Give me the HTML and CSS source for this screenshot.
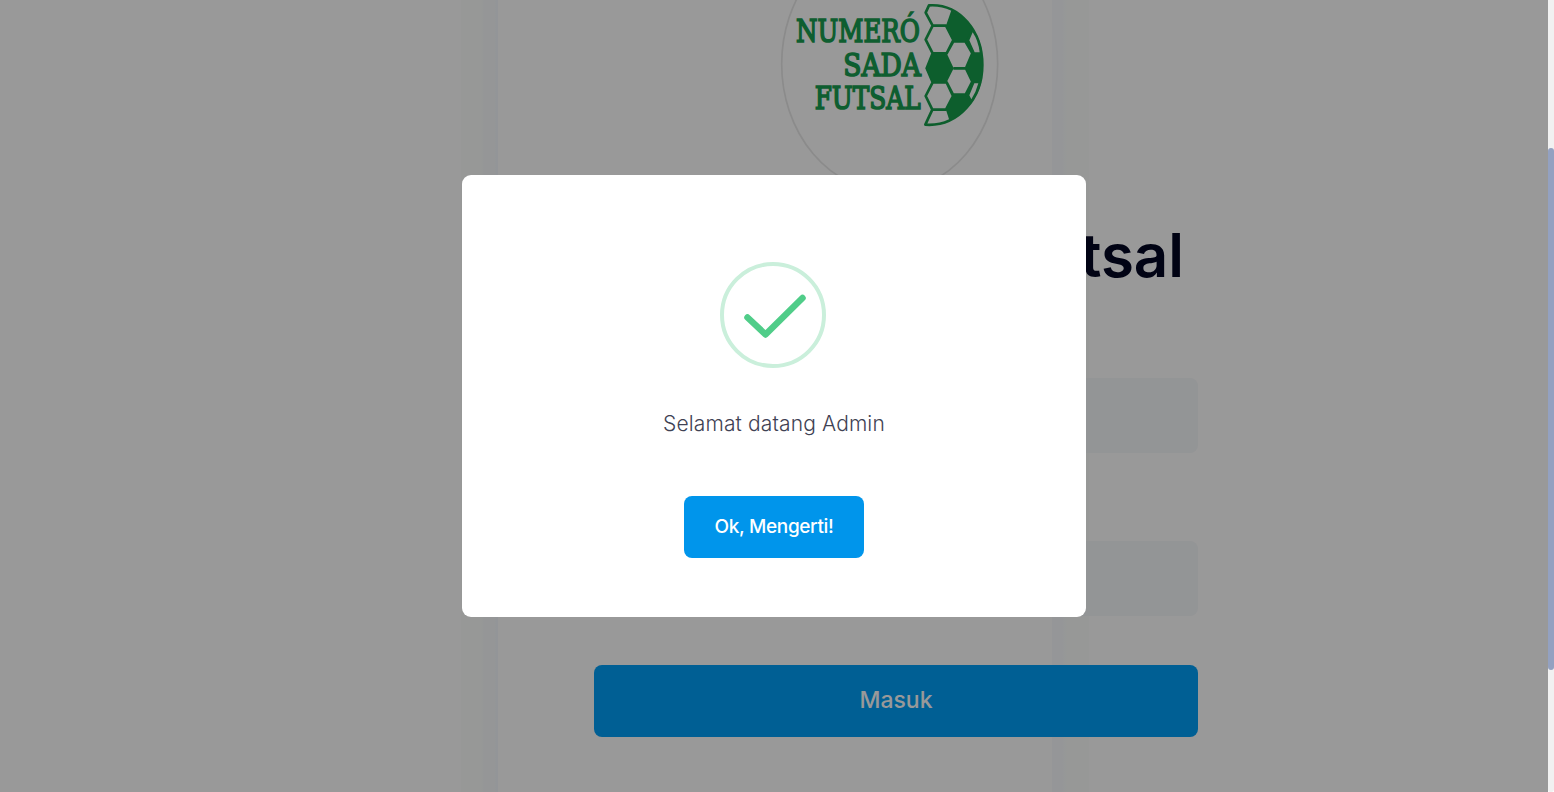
FILE: index.html
```html
<!DOCTYPE html>
<html lang="id">
<head>
<meta charset="utf-8">
<title>Numero Sada Futsal</title>
<link rel="stylesheet" href="styles.css">
</head>
<body>
<div class="page">
  <div class="side side-left"></div>
  <div class="card"></div>
  <div class="side side-right"></div>
  <main class="login">
    <svg class="logo" viewBox="0 0 720 580">
      <ellipse class="logo-ring" cx="359" cy="192" rx="324" ry="382"/>
      <g class="logo-text">
        <text x="78" y="125" textLength="372" lengthAdjust="spacingAndGlyphs">NUMERÓ</text>
        <text x="220" y="227" textLength="233" lengthAdjust="spacingAndGlyphs">SADA</text>
        <text x="134" y="328" textLength="318" lengthAdjust="spacingAndGlyphs">FUTSAL</text>
      </g>
      <path class="ball-line" d="M477 16C570 10 637 95 637 195S565 381 466 374L487 329L467 288L488 247L470 205L488 160L467 119L488 77L467 38ZM488 77H528L550 120L530 160H488M488 247H530L549 288L528 329H487M530 160L550 124H586L607 160L588 205H550M550 205H588L607 245L587 284H549L530 247M607 160H634M607 245H632"/>
      <g class="ball-fill">
        <path d="M544 31Q585 50 610 92L589 124H550L528 77Z"/>
        <path d="M488 160H530L551 205L530 247H488L468 205Z"/>
        <path d="M607 160H635Q643 205 632 247H607L588 205Z"/>
        <path d="M549 284H588L605 305Q580 345 538 361L528 329Z"/>
        <path d="M586 124L606 88Q634 120 636 162H607Z"/>
        <path d="M607 245H634Q627 280 602 310L587 284Z"/>
      </g>
      <path class="ball-window" d="M608 97Q625 122 629 157H614L598 121ZM613 250H625Q618 277 604 298L598 286Z"/>
    </svg>
    <h1 class="title">Numero Sada Futsal</h1>
    <div class="field field-first"></div>
    <div class="field"></div>
    <button class="submit">Masuk</button>
  </main>
</div>
<div class="overlay">
  <section class="modal">
    <svg class="check" viewBox="0 0 106 106">
      <circle cx="53" cy="53" r="51"/>
      <path d="M27.500 55.500L45.500 72.500L82.500 36"/>
    </svg>
    <p class="message">Selamat datang Admin</p>
    <button class="confirm">Ok, Mengerti!</button>
  </section>
</div>
<div class="scrollbar"><div class="thumb"></div></div>
</body>
</html>
```
FILE: styles.css
```css
* { box-sizing: border-box; }
body { margin: 0; height: 792px; overflow: hidden; position: relative; background: #fff; font-family: Inter, "Open Sans", sans-serif; }
.page { display: grid; grid-template-columns: 461px 37px 554px 37px 459px; height: 792px; }
.side, .card, .login { grid-row: 1; }
.side-left { grid-column: 2; background: linear-gradient(90deg, #fcfefc 0 20px, #f8fbfc 23px 34px, #f5f9fd 35px); }
.card { grid-column: 3; background: #fff; }
.side-right { grid-column: 4; background: linear-gradient(90deg, #f8fbfd 0 10px, #fcfefc 15px); }
.login { grid-column: 1 / -1; width: 604px; margin-left: 594px; height: 792px; display: flex; flex-direction: column; }
.logo { display: block; flex: none; width: 240px; height: 193.333px; margin-left: 176px; }
.logo-ring { fill: #fff; stroke: #e8e8e8; stroke-width: 5; }
.logo-text { font-family: "DejaVu Serif", serif; font-size: 94px; fill: #189d50; stroke: #189d50; stroke-width: 5; }
.ball-line { fill: none; stroke: #169d4b; stroke-width: 8; stroke-linejoin: round; }
.ball-fill { fill: #169d4b; }
.ball-window { fill: #fff; }
.title { margin: 21.667px 0 0; padding-right: 14px; height: 80px; font-size: 60px; line-height: 80px; font-weight: 600; text-align: right; white-space: nowrap; color: #020522; }
.field { flex: none; height: 75px; border-radius: 8px; background: #f5f8fa; margin-top: 88px; }
.field-first { margin-top: 83px; }
.submit { flex: none; height: 72px; margin-top: 49px; padding: 0 0 2px; border: 0; border-radius: 8px; background: #009ef7; color: #fff; font: 450 23px Inter, sans-serif; }
.overlay { position: absolute; top: 0; left: 0; width: 1548px; height: 792px; background: rgba(0, 0, 0, .4); display: flex; justify-content: center; align-items: flex-start; padding-top: 175px; }
.modal { width: 624px; height: 442px; border-radius: 9px; background: #fff; display: flex; flex-direction: column; align-items: center; }
.check { width: 106px; height: 106px; margin: 87px 2px 0 0; fill: none; }
.check circle { stroke: #caefdb; stroke-width: 4; }
.check path { stroke: #50cd89; stroke-width: 6.5; stroke-linecap: round; stroke-linejoin: round; }
.message { margin: 40px 0 0; height: 32px; line-height: 32px; font-size: 21px; font-weight: 350; letter-spacing: .13px; white-space: nowrap; color: #3f4254; }
.confirm { width: 180px; height: 62px; margin-top: 56px; padding: 0 0 2px; border: 0; border-radius: 8px; background: #0095eb; color: #fff; font: 450 19px Inter, sans-serif; letter-spacing: -.35px; }
.scrollbar { position: absolute; left: 1548px; top: 0; width: 6px; height: 792px; padding-top: 148px; border-radius: 0 0 3px 3px; background: #f1f1f1; }
.thumb { height: 522px; border-radius: 3px; background: #93a1c1; }
```
